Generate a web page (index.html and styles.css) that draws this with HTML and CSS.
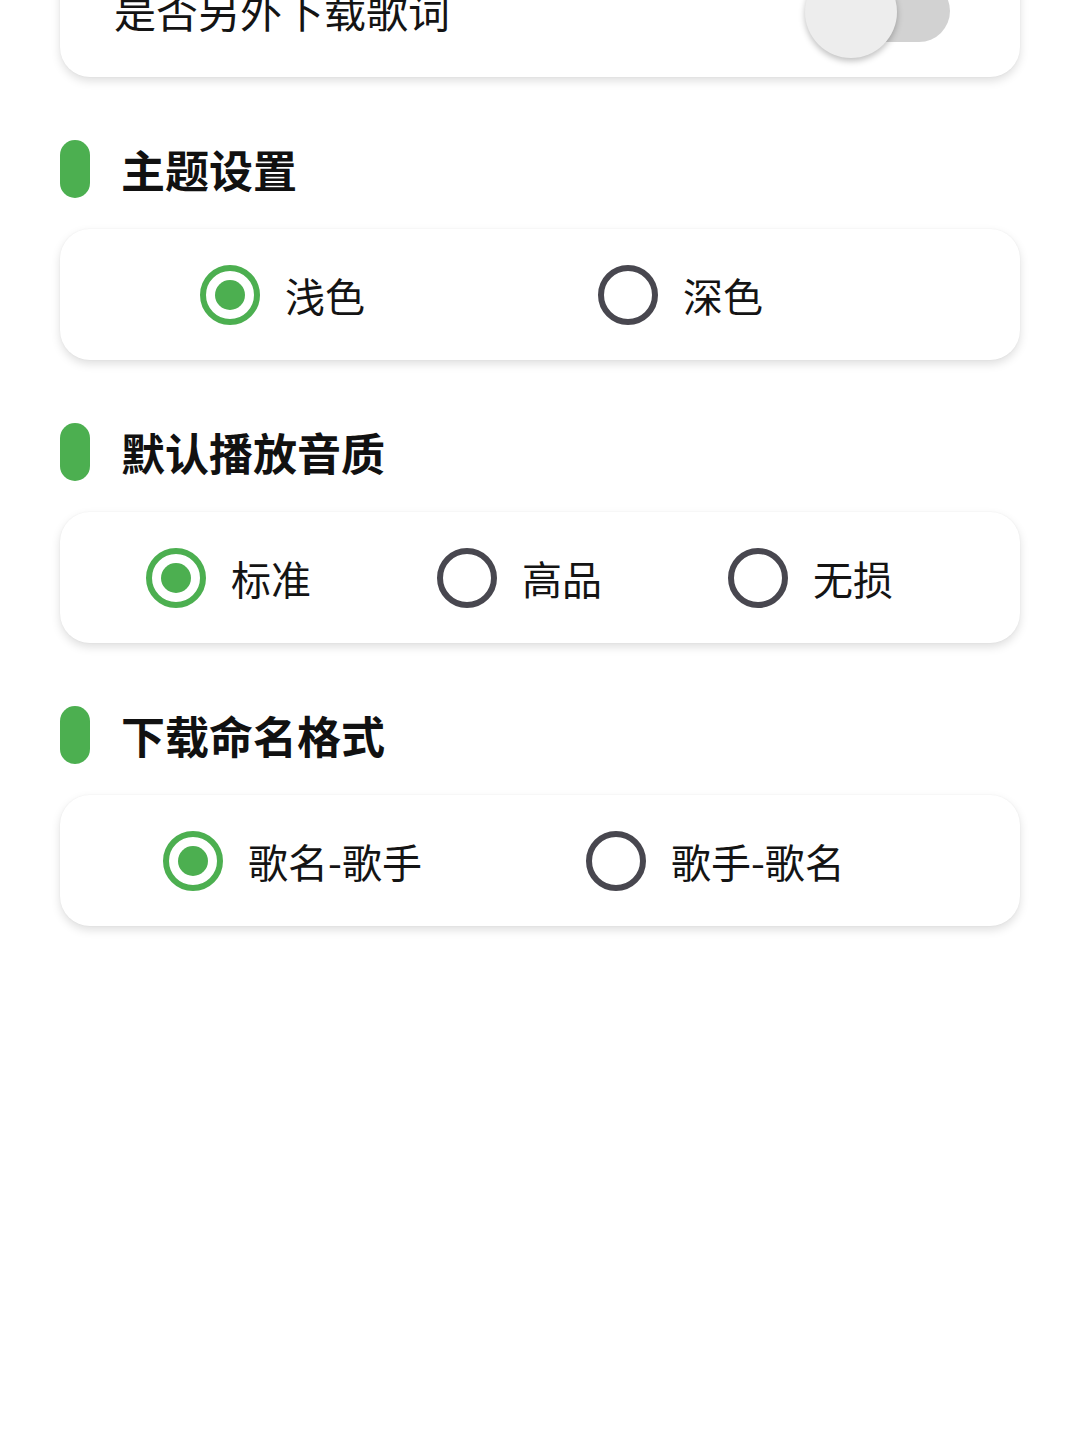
FILE: index.html
```html
<!DOCTYPE html>
<html lang="zh-CN">
<head>
    <meta charset="UTF-8">
    <meta name="viewport" content="width=device-width, initial-scale=1.0">
    <title>设置</title>
    <link rel="stylesheet" href="styles.css">
</head>
<body>
    <div class="page">
        <div class="card card-switch">
            <span class="switch-label">是否另外下载歌词</span>
            <div class="switch">
                <span class="switch-track"></span>
                <span class="switch-thumb"></span>
            </div>
        </div>

        <div class="section">
            <div class="section-header">
                <span class="section-bar"></span>
                <h2 class="section-title">主题设置</h2>
            </div>
            <div class="card radio-group group-theme">
                <div class="radio-item">
                    <span class="radio checked"></span>
                    <span class="radio-label">浅色</span>
                </div>
                <div class="radio-item">
                    <span class="radio"></span>
                    <span class="radio-label">深色</span>
                </div>
            </div>
        </div>

        <div class="section">
            <div class="section-header">
                <span class="section-bar"></span>
                <h2 class="section-title">默认播放音质</h2>
            </div>
            <div class="card radio-group group-quality">
                <div class="radio-item">
                    <span class="radio checked"></span>
                    <span class="radio-label">标准</span>
                </div>
                <div class="radio-item">
                    <span class="radio"></span>
                    <span class="radio-label">高品</span>
                </div>
                <div class="radio-item">
                    <span class="radio"></span>
                    <span class="radio-label">无损</span>
                </div>
            </div>
        </div>

        <div class="section">
            <div class="section-header">
                <span class="section-bar"></span>
                <h2 class="section-title">下载命名格式</h2>
            </div>
            <div class="card radio-group group-naming">
                <div class="radio-item">
                    <span class="radio checked"></span>
                    <span class="radio-label">歌名-歌手</span>
                </div>
                <div class="radio-item">
                    <span class="radio"></span>
                    <span class="radio-label">歌手-歌名</span>
                </div>
            </div>
        </div>
    </div>
</body>
</html>
```

FILE: styles.css
```css
html, body {
    margin: 0;
    background-color: #ffffff;
    font-family: 'Noto Sans CJK SC', 'Noto Sans', sans-serif;
    color: #141414;
}
.page {
    padding: 0 60px 40px;
}
.card {
    background-color: #ffffff;
    border-radius: 30px;
    box-shadow: 0 4px 10px rgba(0, 0, 0, 0.13), 0 0 2px rgba(0, 0, 0, 0.05);
    box-sizing: border-box;
}
.card-switch {
    margin-top: -55px;
    height: 132px;
    display: flex;
    align-items: center;
    justify-content: space-between;
    padding: 0 70px 0 54px;
}
.switch-label {
    font-size: 42px;
    line-height: 50px;
    margin-top: -2px;
}
.switch {
    position: relative;
    width: 144px;
    height: 62px;
}
.switch-track {
    display: block;
    width: 100%;
    height: 100%;
    border-radius: 31px;
    background-color: #d2d2d2;
}
.switch-thumb {
    position: absolute;
    left: -1px;
    top: -14px;
    width: 92px;
    height: 92px;
    border-radius: 50%;
    background-color: #ededed;
    box-shadow: 0 3px 6px rgba(0, 0, 0, 0.25);
}
.section {
    margin-top: 63px;
}
.section-header {
    display: flex;
    align-items: center;
    height: 58px;
}
.section-bar {
    width: 30px;
    height: 58px;
    border-radius: 15px;
    background-color: #4caf50;
}
.section-title {
    margin: 0 0 0 31px;
    font-size: 44px;
    line-height: 58px;
    font-weight: bold;
    color: #111111;
}
.radio-group {
    margin-top: 31px;
    height: 131px;
    display: flex;
    align-items: center;
}
.group-theme {
    padding-left: 140px;
    gap: 233px;
}
.group-quality {
    padding-left: 86px;
    gap: 126px;
}
.group-naming {
    padding-left: 103px;
    gap: 164px;
}
.radio-item {
    display: flex;
    align-items: center;
}
.radio {
    width: 60px;
    height: 60px;
    box-sizing: border-box;
    border: 6px solid #48474f;
    border-radius: 50%;
    display: flex;
    align-items: center;
    justify-content: center;
}
.radio.checked {
    border-color: #4caf50;
}
.radio.checked::after {
    content: '';
    width: 30px;
    height: 30px;
    border-radius: 50%;
    background-color: #4caf50;
}
.radio-label {
    margin-left: 25px;
    font-size: 40px;
    line-height: 50px;
    color: #141414;
}
```
